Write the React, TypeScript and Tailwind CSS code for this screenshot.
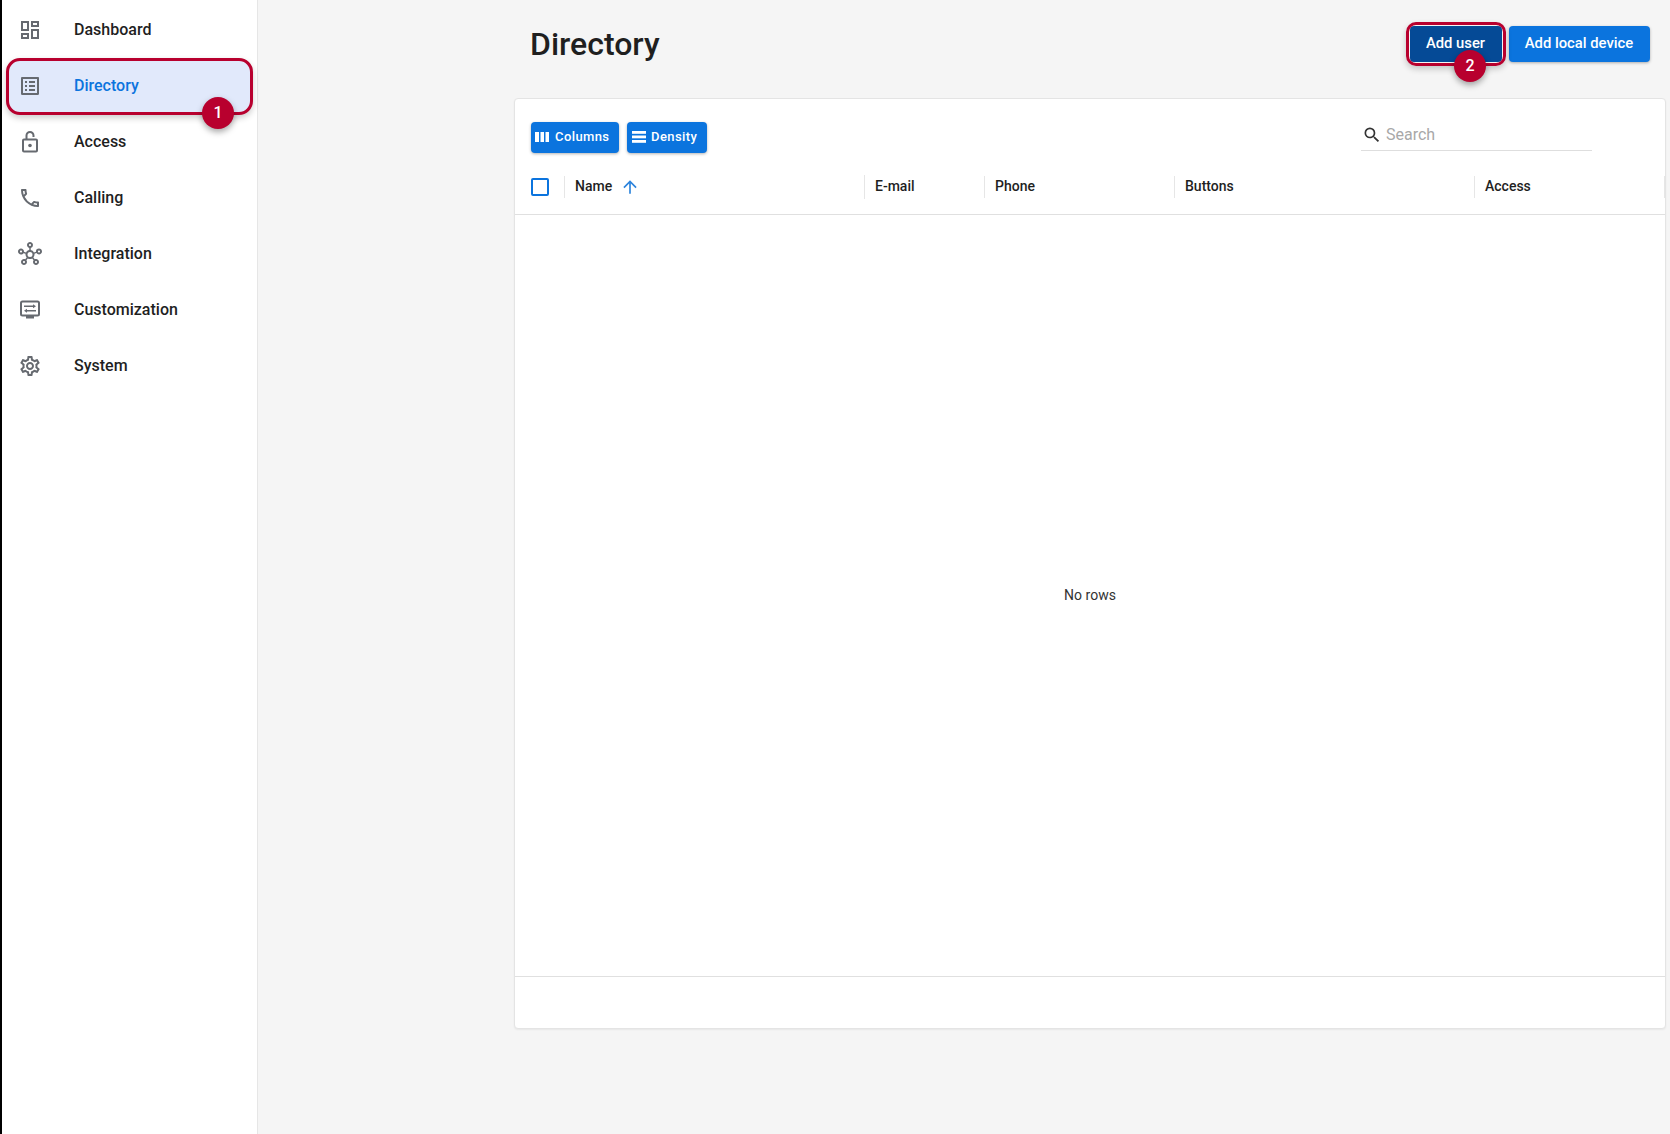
import {
  MdOutlineDashboard,
  MdOutlineListAlt,
  MdOutlineCall,
  MdOutlineHub,
  MdOutlineSettings,
  MdArrowUpward,
  MdSearch,
} from 'react-icons/md';

function AccessIcon({ className }: { className?: string }) {
  return (
    <svg viewBox="0 0 24 24" className={className} fill="none" stroke="currentColor" strokeWidth="2">
      <rect x="5" y="9.500" width="14" height="12" rx="1" />
      <path d="M8.500 9.500V5.500a3.500 3.500 0 0 1 7 0V7" />
      <circle cx="12" cy="15.500" r="1.800" fill="currentColor" stroke="none" />
    </svg>
  );
}

function CustomizationIcon({ className }: { className?: string }) {
  return (
    <svg viewBox="0 0 24 24" className={className} fill="none" stroke="currentColor">
      <rect x="3" y="3.500" width="18" height="14" rx="1.500" strokeWidth="2" />
      <path d="M8 18h8v2.500H8z" fill="currentColor" stroke="none" />
      <path d="M6 8.300h9.500M8.500 12.700H18" strokeWidth="1.500" />
      <path d="M15 6.300l3 2-3 2zM9 10.700l-3 2 3 2z" fill="currentColor" stroke="none" />
    </svg>
  );
}

function ColumnsIcon({ className }: { className?: string }) {
  return (
    <svg viewBox="0 0 20 20" className={className} fill="currentColor">
      <rect x="3" y="5" width="4" height="10" />
      <rect x="8.500" y="5" width="3.500" height="10" />
      <rect x="13.500" y="5" width="3.500" height="10" />
    </svg>
  );
}

function DensityIcon({ className }: { className?: string }) {
  return (
    <svg viewBox="0 0 20 20" className={className} fill="currentColor">
      <rect x="3" y="4" width="14" height="2.800" />
      <rect x="3" y="8.500" width="14" height="2.800" />
      <rect x="3" y="13" width="14" height="2.800" />
    </svg>
  );
}

const navItems = [
  { label: 'Dashboard', Icon: MdOutlineDashboard },
  { label: 'Directory', Icon: MdOutlineListAlt, active: true },
  { label: 'Access', Icon: AccessIcon },
  { label: 'Calling', Icon: MdOutlineCall },
  { label: 'Integration', Icon: MdOutlineHub },
  { label: 'Customization', Icon: CustomizationIcon },
  { label: 'System', Icon: MdOutlineSettings },
];

const columns = [
  { label: 'E-mail', width: 'w-[120px]' },
  { label: 'Phone', width: 'w-[190px]' },
  { label: 'Buttons', width: 'w-[300px]' },
  { label: 'Access', width: 'w-[190px]' },
];

function Marker({ n, className }: { n: number; className: string }) {
  return (
    <div
      className={`absolute z-10 flex h-8 w-8 items-center justify-center rounded-full bg-[#b8002e] text-[16px] font-medium text-white shadow-[0_3px_6px_rgba(0,0,0,0.35)] ${className}`}
    >
      {n}
    </div>
  );
}

export default function App() {
  return (
    <div className="flex h-[1134px] w-[1670px] overflow-hidden bg-[#f5f5f5] font-['Roboto',sans-serif] text-[#1f1f1f]">
      {/* Sidebar */}
      <aside className="w-[258px] shrink-0 border-l-2 border-r border-l-black border-r-[#e6e6e6] bg-white pt-[2px]">
        <nav className="flex flex-col">
          {navItems.map(({ label, Icon, active }) => (
            <div key={label} className="relative flex h-14 items-center">
              {active && (
                <div className="absolute top-0 left-1 h-[57px] w-[247px] rounded-[14px] border-[3.500px] border-[#b8002e] bg-[#e1e9fb] shadow-[0_3px_6px_rgba(0,0,0,0.2)]" />
              )}
              <Icon className="relative ml-[16px] h-[24px] w-[24px] shrink-0 text-[#666a70]" />
              <span
                className={`relative ml-[32px] text-[16px] font-medium ${
                  active ? 'text-[#0b74de]' : 'text-[#1f1f1f]'
                }`}
              >
                {label}
              </span>
              {active && <Marker n={1} className="top-[39px] left-[200px]" />}
            </div>
          ))}
        </nav>
      </aside>

      {/* Main */}
      <main className="flex-1 pl-[256px] pr-[4px]">
        <header className="flex h-[98px] items-start justify-between pl-4 pr-[16px]">
          <h1 className="mt-[24px] text-[32px] font-medium leading-[40px]">Directory</h1>
          <div className="mt-[26px] flex gap-[7px]">
            <div className="relative">
              <div className="absolute -inset-[4px] rounded-[10px] border-[3.500px] border-[#b8002e] shadow-[0_3px_6px_rgba(0,0,0,0.2)]" />
              <button className="h-[36px] w-[92px] rounded bg-[#054a96] pr-[1px] pb-[2px] text-[14.800px] font-medium text-white">
                Add user
              </button>
              <Marker n={2} className="top-[24px] left-[44px]" />
            </div>
            <button className="h-[36px] w-[141px] rounded bg-[#0b74de] pr-[1px] pb-[2px] text-[14.800px] font-medium text-white shadow-[0_1px_3px_rgba(0,0,0,0.3)]">
              Add local device
            </button>
          </div>
        </header>

        <section className="flex h-[931px] flex-col rounded border border-[#e4e4e4] bg-white shadow-[0_1px_2px_rgba(0,0,0,0.06)]">
          {/* Toolbar */}
          <div className="flex h-[67px] items-start justify-between pl-4 pr-[73px] pt-[23px]">
            <div className="flex gap-2">
              <button className="flex h-[31px] w-[88px] items-center gap-[3px] rounded bg-[#0b74de] pb-[1px] pl-[1px] text-[13px] font-medium tracking-[0.4px] text-white shadow-[0_1px_3px_rgba(0,0,0,0.3)]">
                <ColumnsIcon className="h-5 w-5" />
                Columns
              </button>
              <button className="flex h-[31px] w-[80px] items-center gap-[2px] rounded bg-[#0b74de] pb-[1px] pl-[2px] text-[13px] font-medium tracking-[0.4px] text-white shadow-[0_1px_3px_rgba(0,0,0,0.3)]">
                <DensityIcon className="h-5 w-5" />
                Density
              </button>
            </div>
            <div className="flex h-[29px] w-[231px] items-center border-b border-[#dedede] pb-[2px] pl-[1px]">
              <MdSearch className="h-[20px] w-[20px] text-[#333]" />
              <span className="ml-[4px] text-[16px] text-[#a8a8a8]">Search</span>
            </div>
          </div>

          {/* Column headers */}
          <div className="flex h-[49px] items-center border-b border-[#e0e0e0] pb-[6px]">
            <div className="flex w-[50px] items-center justify-between">
              <div className="ml-4 h-[18px] w-[18px] rounded-[2px] border-2 border-[#0b74de]" />
              <div className="h-[22px] w-px bg-[#e6e6e6]" />
            </div>
            <div className="flex w-[300px] items-center border-r border-[#e6e6e6] pl-[10px]">
              <span className="pb-[2px] text-[14px] leading-[22px] font-medium">Name</span>
              <MdArrowUpward className="ml-[8px] h-[20px] w-[20px] text-[#2c84dc]" />
            </div>
            {columns.map((c) => (
              <div
                key={c.label}
                className={`flex h-[22px] items-center border-r border-[#e6e6e6] pb-[2px] pl-[10px] text-[14px] font-medium ${c.width}`}
              >
                {c.label}
              </div>
            ))}
          </div>

          {/* Empty rows */}
          <div className="flex flex-1 items-center justify-center text-[14px] text-[#333]">No rows</div>

          {/* Footer */}
          <div className="h-[52px] border-t border-[#e0e0e0]" />
        </section>
      </main>
    </div>
  );
}
